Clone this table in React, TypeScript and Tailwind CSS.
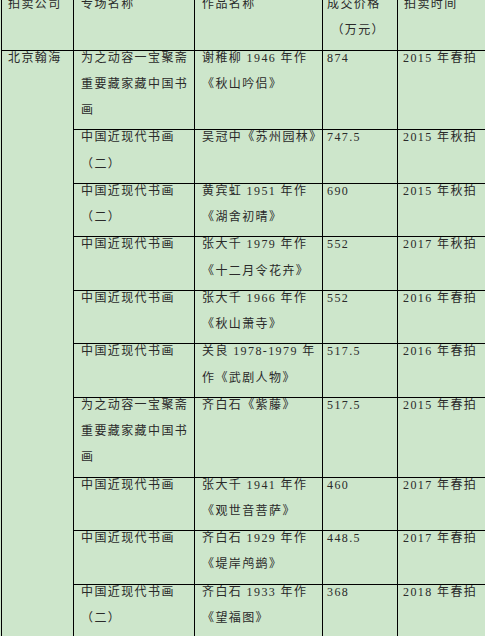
const rows: { session: string[]; work: string[]; price: string; time: string }[] = [
  { session: ['为之动容一宝聚斋', '重要藏家藏中国书', '画'], work: ['谢稚柳 1946 年作', '《秋山吟侣》'], price: '874', time: '2015 年春拍' },
  { session: ['中国近现代书画', '（二）'], work: ['吴冠中《苏州园林》'], price: '747.5', time: '2015 年秋拍' },
  { session: ['中国近现代书画', '（二）'], work: ['黄宾虹 1951 年作', '《湖舍初晴》'], price: '690', time: '2015 年秋拍' },
  { session: ['中国近现代书画'], work: ['张大千 1979 年作', '《十二月令花卉》'], price: '552', time: '2017 年秋拍' },
  { session: ['中国近现代书画'], work: ['张大千 1966 年作', '《秋山萧寺》'], price: '552', time: '2016 年春拍' },
  { session: ['中国近现代书画'], work: ['关良 1978-1979 年', '作《武剧人物》'], price: '517.5', time: '2016 年春拍' },
  { session: ['为之动容一宝聚斋', '重要藏家藏中国书', '画'], work: ['齐白石《紫藤》'], price: '517.5', time: '2015 年春拍' },
  { session: ['中国近现代书画'], work: ['张大千 1941 年作', '《观世音菩萨》'], price: '460', time: '2017 年春拍' },
  { session: ['中国近现代书画'], work: ['齐白石 1929 年作', '《堤岸鸬鹚》'], price: '448.5', time: '2017 年春拍' },
  { session: ['中国近现代书画', '（二）'], work: ['齐白石 1933 年作', '《望福图》'], price: '368', time: '2018 年春拍' },
];

function Lines({ lines, className = '' }: { lines: string[]; className?: string }) {
  return (
    <div className={`-mt-[6px] mb-[6px] whitespace-nowrap ${className}`}>
      {lines.map((l, i) => (
        <div key={i}>{l}</div>
      ))}
    </div>
  );
}

export default function App() {
  const lines = (n: number) => (n === 3 ? 'h-[79.75px]' : 'h-[53.5px]');

  return (
    <div
      className="w-[485px] h-[636px] overflow-hidden bg-[#cde6cb] text-[#2a2a2a] text-[12px] leading-[26.25px] tracking-[1.4px]"
      style={{ fontFamily: "'Liberation Serif', 'Noto Sans CJK SC', serif" }}
    >
      <div className="-mt-[4px] ml-[1px] w-[497px] border-t border-black">
        {/* Header */}
        <div className="grid grid-cols-[73px_121px_128px_75px_100px] border-b border-black h-[53.5px]">
          <div className="border-l border-r border-black pl-[6px]">
            <Lines lines={['拍卖公司']} />
          </div>
          <div className="border-r border-black pl-[7px]">
            <Lines lines={['专场名称']} />
          </div>
          <div className="border-r border-black pl-[7px]">
            <Lines lines={['作品名称']} />
          </div>
          <div className="border-r border-black pl-[4px]">
            <Lines lines={['成交价格', '\u00a0（万元）']} />
          </div>
          <div className="pl-[6px]">
            <Lines lines={['拍卖时间']} />
          </div>
        </div>

        {/* Body */}
        <div className="flex">
          <div className="w-[73px] shrink-0 border-l border-r border-black pl-[6px]">
            <Lines lines={['北京翰海']} />
          </div>
          <div className="flex flex-col">
            {rows.map((r, i) => {
              const n = Math.max(r.session.length, r.work.length);
              return (
                <div
                  key={i}
                  className={`grid grid-cols-[121px_128px_75px_100px] border-b border-black ${lines(n)}`}
                >
                  <div className="border-r border-black pl-[7px]">
                    <Lines lines={r.session} />
                  </div>
                  <div className="border-r border-black pl-[7px]">
                    <Lines lines={r.work} />
                  </div>
                  <div className="border-r border-black pl-[4px]">
                    <Lines lines={[r.price]} />
                  </div>
                  <div className="pl-[5px]">
                    <Lines lines={[r.time]} />
                  </div>
                </div>
              );
            })}
          </div>
        </div>
      </div>
    </div>
  );
}
